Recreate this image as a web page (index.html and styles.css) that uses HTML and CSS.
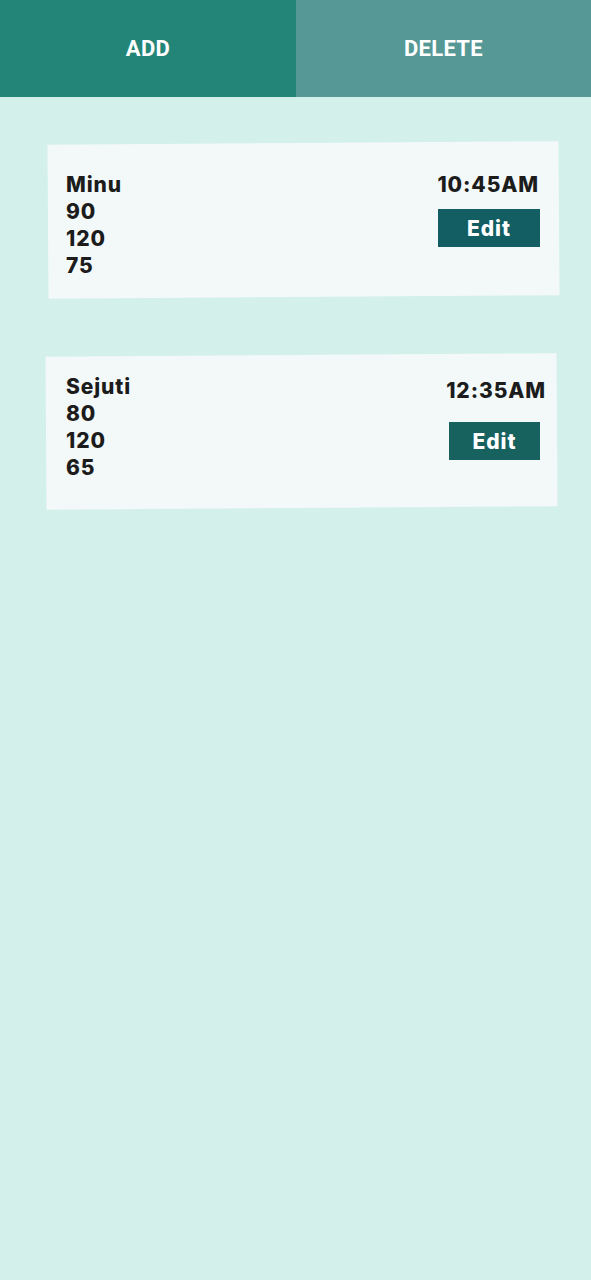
FILE: index.html
```html
<!DOCTYPE html>
<html lang="en">
<head>
<meta charset="utf-8">
<title>Records</title>
<link rel="stylesheet" href="styles.css">
</head>
<body>
<header class="tabs">
  <div class="tab tab-add">ADD</div>
  <div class="tab tab-delete">DELETE</div>
</header>
<main class="list">
  <section class="card card-one">
    <div class="info">
      <div class="line">Minu</div>
      <div class="line">90</div>
      <div class="line">120</div>
      <div class="line">75</div>
    </div>
    <div class="side side-one">
      <div class="time">10:45AM</div>
      <button class="edit edit-one">Edit</button>
    </div>
  </section>
  <section class="card card-two">
    <div class="info">
      <div class="line">Sejuti</div>
      <div class="line">80</div>
      <div class="line">120</div>
      <div class="line">65</div>
    </div>
    <div class="side side-two">
      <div class="time">12:35AM</div>
      <button class="edit edit-two">Edit</button>
    </div>
  </section>
</main>
</body>
</html>
```
FILE: styles.css
```css
html, body {
  margin: 0;
  padding: 0;
}
body {
  background: #d3f0eb;
  min-height: 1280px;
  font-family: Inter, "Noto Sans", sans-serif;
}
.tabs {
  display: flex;
  height: 97px;
}
.tab {
  display: flex;
  align-items: center;
  justify-content: center;
  color: #ffffff;
  font-family: Roboto, "Liberation Sans", sans-serif;
  font-weight: 700;
  font-size: 22px;
  letter-spacing: 0.3px;
}
.tab-add {
  width: 296px;
  background: #238577;
}
.tab-delete {
  flex: 1;
  background: #559896;
}
.list {
  display: flex;
  flex-direction: column;
}
.card {
  position: relative;
  z-index: 0;
  display: flex;
  justify-content: space-between;
  box-sizing: border-box;
  width: 511px;
}
.card::before {
  content: "";
  position: absolute;
  inset: 0;
  z-index: -1;
  background: #f3f9f9;
  transform: rotate(-0.4deg);
}
.card-one {
  margin: 46px 0 0 48px;
  height: 154px;
  padding: 28px 20px 0 18px;
}
.card-two {
  margin: 58px 0 0 46px;
  height: 153px;
  padding: 18px 11px 0 20px;
}
.info {
  display: flex;
  flex-direction: column;
}
.line, .time {
  font-size: 21px;
  font-weight: 800;
  line-height: 27px;
  letter-spacing: 0.9px;
  color: #1c1c1c;
}
.side {
  display: flex;
  flex-direction: column;
  align-items: flex-end;
}
.side-one {
  gap: 11px;
}
.side-two {
  padding-top: 4px;
  gap: 18px;
}
.edit {
  height: 38px;
  border: none;
  margin: 0;
  background: #125e63;
  color: #ffffff;
  font-family: Inter, "Noto Sans", sans-serif;
  font-weight: 800;
  font-size: 21px;
  letter-spacing: 0.9px;
  padding: 0;
}
.edit-one {
  width: 102px;
  margin-right: -1px;
}
.edit-two {
  width: 91px;
  margin-right: 6px;
  background: #17625f;
}
```
